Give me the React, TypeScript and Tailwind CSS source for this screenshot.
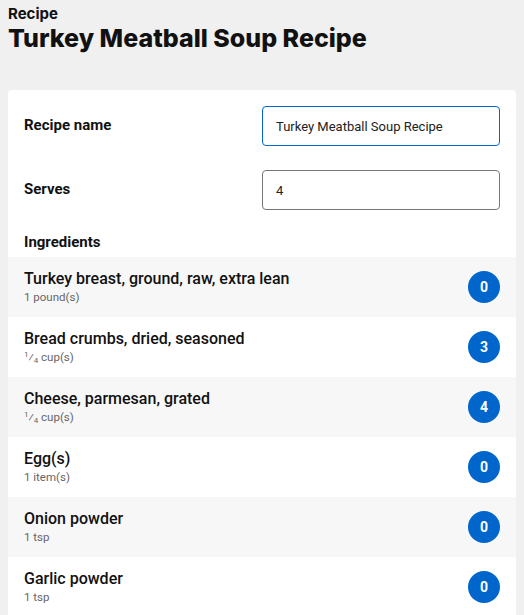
import React from 'react'

const ingredients = [
  { name: 'Turkey breast, ground, raw, extra lean', amount: '1 pound(s)', count: 0 },
  { name: 'Bread crumbs, dried, seasoned', amount: '¼ cup(s)', frac: true, count: 3 },
  { name: 'Cheese, parmesan, grated', amount: '¼ cup(s)', frac: true, count: 4 },
  { name: 'Egg(s)', amount: '1 item(s)', count: 0 },
  { name: 'Onion powder', amount: '1 tsp', count: 0 },
  { name: 'Garlic powder', amount: '1 tsp', count: 0 },
]

const App: React.FC = () => {
  return (
    <div className="min-h-screen bg-[#f0f0f0] px-2 pt-[5px] text-[#111]" style={{ fontFamily: 'Roboto, "Noto Sans", sans-serif' }}>
      <div style={{ fontFamily: 'Inter, sans-serif' }}>
        <div className="text-[15px] font-bold leading-[18px]">Recipe</div>
        <h1 className="text-[25px] font-extrabold leading-[30px]">Turkey Meatball Soup Recipe</h1>
      </div>

      <div className="mt-[37px] rounded bg-white pt-4">
        <div className="px-4">
          <div className="mb-6 grid grid-cols-2 items-center">
            <label className="-mt-[1px] text-[15px] font-bold">Recipe name</label>
            <input
              defaultValue="Turkey Meatball Soup Recipe"
              className="h-10 rounded border border-[#0066cc] px-[13px] text-[13px] text-[#222] outline-none"
            />
          </div>
          <div className="mb-6 grid grid-cols-2 items-center">
            <label className="-mt-[1px] text-[15px] font-bold">Serves</label>
            <input defaultValue="4" className="h-10 rounded border border-[#777] px-[13px] text-[13px] text-[#222] outline-none" />
          </div>
          <div className="-mt-[2px] pb-[5px] text-[15px] font-bold leading-5">Ingredients</div>
        </div>

        <ul>
          {ingredients.map((item, index) => (
            <li
              key={index}
              className={`flex h-[60px] items-center justify-between px-4 ${index % 2 === 0 ? 'bg-[#f7f7f7]' : 'bg-white'}`}
            >
              <div>
                <div className="text-[16px] font-medium leading-5">{item.name}</div>
                <div className="text-[11.5px] leading-4 text-[#666]">
                  {item.frac ? (
                    <>
                      <sup className="text-[8px]">1</sup>⁄<sub className="text-[8px]">4</sub> cup(s)
                    </>
                  ) : (
                    item.amount
                  )}
                </div>
              </div>
              <span className="flex h-8 w-8 items-center justify-center rounded-full bg-[#0066cc] text-[14px] font-bold text-white">
                {item.count}
              </span>
            </li>
          ))}
        </ul>
      </div>
    </div>
  )
}

export default App
